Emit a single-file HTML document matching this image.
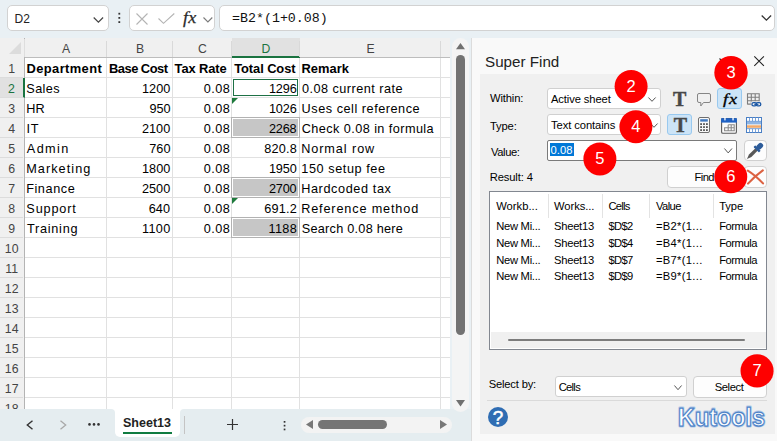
<!DOCTYPE html>
<html lang="en">
<head>
<meta charset="utf-8">
<title>Super Find</title>
<style>
*{box-sizing:border-box;margin:0;padding:0}
html,body{width:777px;height:441px;overflow:hidden}
body{position:relative;background:#e9f0f4;font-family:"Liberation Sans",sans-serif;color:#000}
.abs{position:absolute}
svg{position:absolute;overflow:visible}
/* top bar */
.box{position:absolute;top:5px;height:26px;background:#fff;border:1px solid #d2d2d2;border-radius:5px}
#namebox{left:7px;width:102px}
#namebox span{position:absolute;left:6.6px;top:6px;font-size:12px;line-height:14px;color:#222}
#fbtns{left:129px;width:86px}
#fbar{left:219px;width:556px}
#fbar span{position:absolute;left:12px;top:5px;font-family:"Liberation Mono",monospace;font-size:13.3px;line-height:16px;color:#111}
/* grid */
#sheet{position:absolute;left:0;top:38px;width:449.5px;height:371px;background:#fff;overflow:hidden}
#colhdr{position:absolute;left:0;top:0;width:450px;height:20px;background:#f0f0f0;border-bottom:1px solid #bdbdbd}
#rowhdr{position:absolute;left:0;top:0;width:25px;height:371px;background:#f0f0f0;border-right:1px solid #b4b4b4}
.ch{position:absolute;top:0;height:19px;font-size:12.2px;line-height:23px;text-align:center;color:#444;overflow:hidden}
.chs{background:#e1e1e1;color:#1a7340;border-bottom:2px solid #1a7340;height:20px}
.rh{position:absolute;left:0;width:23.4px;height:20px;font-size:12.3px;line-height:23px;text-align:center;color:#444;border-bottom:1px solid #dcdcdc}
.rhs{background:#e1e1e1;color:#1a7340;border-right:2px solid #1a7340;width:25px}
.vl{position:absolute;top:20px;width:1px;height:351px;background:#e1e1e1}
.hl{position:absolute;left:25px;width:425px;height:1px;background:#e1e1e1}
.c{position:absolute;height:20px;font-size:12.7px;line-height:23px;white-space:nowrap;color:#000}
.b{font-weight:bold;font-size:12.9px}
.r{text-align:right}
.hitb{position:absolute;left:231px;width:69px;height:21px;border:1px solid #b2b2b2}
.hit{position:absolute;left:233px;width:65px;height:17px;background:#c6c6c6}
.active{position:absolute;left:233px;top:41px;width:65px;height:17px;border:1px solid #1e7145}
.tri{position:absolute;width:0;height:0;border-top:6px solid #1e7a3c;border-right:6px solid transparent}
/* tab bar */
#tabbar{position:absolute;left:0;top:409px;width:471px;height:32px;background:#e5edf0}
/* panel */
#panel{position:absolute;left:471px;top:38px;width:306px;height:403px;background:#f9f9f9;border-left:1px solid #dcdcdc}
#inner{position:absolute;left:480px;top:74px;width:294.6px;height:359.5px;background:#f0f0f0}
.t{position:absolute;font-family:"Liberation Sans",sans-serif;font-size:11.2px;line-height:14px;white-space:nowrap;color:#000}
.dd{position:absolute;background:#fff;border:1px solid #d0d0d0;border-radius:3px}
.btn{position:absolute;background:#fdfdfd;border:1px solid #d0d0d0;border-radius:4px}
.sel{position:absolute;background:#cce4f7;border:1px solid #99c9ef;border-radius:3px}
.num{position:absolute;width:33.6px;height:33.6px;border-radius:50%;background:#fe0000;color:#fff;font-size:16.5px;line-height:32.6px;text-align:center}
#tabname{left:123px;top:6px;font-size:12.5px;font-weight:bold;line-height:16px;color:#222;white-space:nowrap}
#ptitle{left:485px;top:52px;font-size:15.2px;line-height:20px;color:#222;white-space:nowrap}
.ticon{font-family:"Liberation Serif",serif;font-weight:bold;font-size:20px;line-height:21px;color:#484848;width:16px;text-align:center;-webkit-text-stroke:0.45px #484848}
.chl{position:absolute;top:3px;width:1px;height:16px;background:#d9d9d9}
</style>
</head>
<body>
<div class="box" id="namebox"><span>D2</span>
<svg style="left:85px;top:11px" width="11" height="6" viewBox="0 0 11 6"><path d="M0.7 0.5 L5.4 5.2 L10.1 0.5" fill="none" stroke="#444" stroke-width="1.2"/></svg>
</div>
<svg style="left:118px;top:13px" width="3" height="11" viewBox="0 0 3 11"><rect x="0.4" y="-0.2" width="1.8" height="1.8" fill="#333"/><rect x="0.4" y="4" width="1.8" height="1.8" fill="#333"/><rect x="0.4" y="8.2" width="1.8" height="1.8" fill="#333"/></svg>
<div class="box" id="fbtns">
<svg style="left:6px;top:7px" width="12" height="12" viewBox="0 0 12 12"><path d="M0.5 0.5 L11.5 11.5 M11.5 0.5 L0.5 11.5" stroke="#b4b4b4" stroke-width="1.1" fill="none"/></svg>
<svg style="left:28px;top:7px" width="17" height="11" viewBox="0 0 17 11"><path d="M0.5 5.5 L5.5 10.3 L16.3 0.5" stroke="#b4b4b4" stroke-width="1.1" fill="none"/></svg>
<span class="abs" style="left:53px;top:1.5px;font-family:'Liberation Serif',serif;font-style:italic;font-size:16.5px;line-height:20px;color:#2a2a2a;letter-spacing:0.3px;-webkit-text-stroke:0.25px #2a2a2a;transform:scaleX(1.1);transform-origin:0 50%">fx</span>
<svg style="left:73px;top:11px" width="10" height="6" viewBox="0 0 10 6"><path d="M0.5 0.5 L4.9 4.9 L9.3 0.5" fill="none" stroke="#7a7a7a" stroke-width="1.1"/></svg>
</div>
<div class="box" id="fbar"><span>=B2*(1+0.08)</span>
<svg style="left:541px;top:9px" width="11" height="6" viewBox="0 0 11 6"><path d="M0.7 0.5 L5.4 5.2 L10.1 0.5" fill="none" stroke="#333" stroke-width="1.3"/></svg>
</div>
<div class="abs" style="left:24px;top:38px;width:1px;height:1px;background:#000"></div>

<div id="sheet">
<div id="colhdr"></div>
<div id="rowhdr"></div>
<svg style="left:9px;top:4px" width="12" height="12" viewBox="0 0 12 12"><path d="M12 0 L12 12 L0 12 Z" fill="#dcdcdc"/></svg>
<div class="abs" style="left:24px;top:1px;width:1px;height:18px;background:#dedede"></div>
<div class="ch" style="left:25px;width:82px">A</div>
<div class="ch" style="left:107px;width:66px">B</div>
<div class="ch" style="left:173px;width:59px">C</div>
<div class="ch chs" style="left:232px;width:68px">D</div>
<div class="ch" style="left:300px;width:141px">E</div>
<div class="chl" style="left:106px"></div>
<div class="chl" style="left:172px"></div>
<div class="chl" style="left:231px"></div>
<div class="chl" style="left:299px"></div>
<div class="chl" style="left:440px"></div>
<div class="vl" style="left:106px"></div>
<div class="vl" style="left:172px"></div>
<div class="vl" style="left:231px"></div>
<div class="vl" style="left:299px"></div>
<div class="vl" style="left:440px"></div>
<div class="hl" style="top:39px"></div>
<div class="rh" style="top:20px">1</div>
<div class="hl" style="top:59px"></div>
<div class="rh rhs" style="top:40px">2</div>
<div class="hl" style="top:79px"></div>
<div class="rh" style="top:60px">3</div>
<div class="hl" style="top:99px"></div>
<div class="rh" style="top:80px">4</div>
<div class="hl" style="top:119px"></div>
<div class="rh" style="top:100px">5</div>
<div class="hl" style="top:139px"></div>
<div class="rh" style="top:120px">6</div>
<div class="hl" style="top:159px"></div>
<div class="rh" style="top:140px">7</div>
<div class="hl" style="top:179px"></div>
<div class="rh" style="top:160px">8</div>
<div class="hl" style="top:199px"></div>
<div class="rh" style="top:180px">9</div>
<div class="hl" style="top:219px"></div>
<div class="rh" style="top:200px">10</div>
<div class="hl" style="top:239px"></div>
<div class="rh" style="top:220px">11</div>
<div class="hl" style="top:259px"></div>
<div class="rh" style="top:240px">12</div>
<div class="hl" style="top:279px"></div>
<div class="rh" style="top:260px">13</div>
<div class="hl" style="top:299px"></div>
<div class="rh" style="top:280px">14</div>
<div class="hl" style="top:319px"></div>
<div class="rh" style="top:300px">15</div>
<div class="hl" style="top:339px"></div>
<div class="rh" style="top:320px">16</div>
<div class="hl" style="top:359px"></div>
<div class="rh" style="top:340px">17</div>
<div class="hl" style="top:379px"></div>
<div class="rh" style="top:360px">18</div>
<div class="hitb" style="top:79px"></div><div class="hit" style="top:81px"></div>
<div class="hitb" style="top:139px"></div><div class="hit" style="top:141px"></div>
<div class="hitb" style="top:179px"></div><div class="hit" style="top:181px"></div>
<div class="c b" style="left:26.51px;top:19px;letter-spacing:0.401px">Department</div>
<div class="c b" style="left:109.09px;top:19px;letter-spacing:-0.521px">Base Cost</div>
<div class="c b" style="left:174.61px;top:19px;letter-spacing:-0.103px">Tax Rate</div>
<div class="c b" style="left:234.20px;top:19px;letter-spacing:-0.078px">Total Cost</div>
<div class="c b" style="left:301.51px;top:19px;letter-spacing:0.035px">Remark</div>
<div class="c" style="left:26.34px;top:40px;letter-spacing:0.355px">Sales</div>
<div class="c" style="left:142.01px;top:40px;letter-spacing:0.022px">1200</div>
<div class="c" style="left:203.64px;top:40px;letter-spacing:0.514px">0.08</div>
<div class="c" style="left:268.89px;top:40px;letter-spacing:-0.085px">1296</div>
<div class="c" style="left:301.92px;top:40px;letter-spacing:0.478px">0.08 current rate</div>
<div class="c" style="left:26.13px;top:60px;letter-spacing:0.143px">HR</div>
<div class="c" style="left:149.39px;top:60px;letter-spacing:-0.005px">950</div>
<div class="c" style="left:203.64px;top:60px;letter-spacing:0.514px">0.08</div>
<div class="c" style="left:268.89px;top:60px;letter-spacing:-0.085px">1026</div>
<div class="c" style="left:301.62px;top:60px;letter-spacing:0.522px">Uses cell reference</div>
<div class="c" style="left:26.42px;top:80px;letter-spacing:0.787px">IT</div>
<div class="c" style="left:141.88px;top:80px;letter-spacing:0.067px">2100</div>
<div class="c" style="left:203.64px;top:80px;letter-spacing:0.514px">0.08</div>
<div class="c" style="left:268.93px;top:80px;letter-spacing:-0.169px">2268</div>
<div class="c" style="left:301.75px;top:80px;letter-spacing:0.425px">Check 0.08 in formula</div>
<div class="c" style="left:26.87px;top:100px;letter-spacing:1.361px">Admin</div>
<div class="c" style="left:149.20px;top:100px;letter-spacing:0.090px">760</div>
<div class="c" style="left:203.64px;top:100px;letter-spacing:0.514px">0.08</div>
<div class="c" style="left:264.31px;top:100px;letter-spacing:0.177px">820.8</div>
<div class="c" style="left:301.13px;top:100px;letter-spacing:0.922px">Normal row</div>
<div class="c" style="left:26.13px;top:120px;letter-spacing:1.075px">Marketing</div>
<div class="c" style="left:142.01px;top:120px;letter-spacing:0.022px">1800</div>
<div class="c" style="left:203.64px;top:120px;letter-spacing:0.514px">0.08</div>
<div class="c" style="left:268.89px;top:120px;letter-spacing:-0.107px">1950</div>
<div class="c" style="left:301.36px;top:120px;letter-spacing:0.560px">150 setup fee</div>
<div class="c" style="left:26.13px;top:140px;letter-spacing:0.589px">Finance</div>
<div class="c" style="left:141.88px;top:140px;letter-spacing:0.067px">2500</div>
<div class="c" style="left:203.64px;top:140px;letter-spacing:0.514px">0.08</div>
<div class="c" style="left:268.93px;top:140px;letter-spacing:-0.181px">2700</div>
<div class="c" style="left:301.13px;top:140px;letter-spacing:0.607px">Hardcoded tax</div>
<div class="c" style="left:26.34px;top:160px;letter-spacing:0.850px">Support</div>
<div class="c" style="left:148.85px;top:160px;letter-spacing:-0.038px">640</div>
<div class="c" style="left:203.64px;top:160px;letter-spacing:0.514px">0.08</div>
<div class="c" style="left:264.14px;top:160px;letter-spacing:0.260px">691.2</div>
<div class="c" style="left:301.13px;top:160px;letter-spacing:0.848px">Reference method</div>
<div class="c" style="left:26.88px;top:180px;letter-spacing:0.751px">Training</div>
<div class="c" style="left:142.01px;top:180px;letter-spacing:0.322px">1100</div>
<div class="c" style="left:203.64px;top:180px;letter-spacing:0.514px">0.08</div>
<div class="c" style="left:268.54px;top:180px;letter-spacing:0.290px">1188</div>
<div class="c" style="left:301.79px;top:180px;letter-spacing:0.252px">Search 0.08 here</div>
<div class="active"></div>
<div class="tri" style="left:232px;top:60px"></div>
<div class="tri" style="left:232px;top:160px"></div>
</div>
<!-- vertical scrollbar -->
<div class="abs" style="left:452px;top:37.7px;width:17px;height:374px;border-radius:8.5px;background:#f4f4f4;z-index:3"></div>
<svg style="left:456px;top:43.2px;z-index:4" width="9" height="6.3" viewBox="0 0 9 6.3"><path d="M4.5 0 L9 6.3 L0 6.3 Z" fill="#707070"/></svg>
<div class="abs" style="left:456px;top:55px;width:9px;height:280px;border-radius:4.5px;background:#727272;z-index:4"></div>
<svg style="left:456px;top:400.3px;z-index:4" width="9" height="6.5" viewBox="0 0 9 6.5"><path d="M0 0 L9 0 L4.5 6.5 Z" fill="#707070"/></svg>
<!-- tab bar -->
<div id="tabbar">
<svg style="left:26px;top:11px" width="8" height="10" viewBox="0 0 8 10"><path d="M6.5 0.7 L1.3 5 L6.5 9.3" fill="none" stroke="#333" stroke-width="1.4"/></svg>
<svg style="left:59px;top:11px" width="8" height="10" viewBox="0 0 8 10"><path d="M1.5 0.7 L6.7 5 L1.5 9.3" fill="none" stroke="#a8a8a8" stroke-width="1.3"/></svg>
<svg style="left:88px;top:14px" width="12" height="3" viewBox="0 0 12 3"><circle cx="1.5" cy="1.4" r="1.3" fill="#333"/><circle cx="6" cy="1.4" r="1.3" fill="#333"/><circle cx="10.5" cy="1.4" r="1.3" fill="#333"/></svg>
<div class="abs" style="left:110px;top:0;width:74px;height:6px;background:#fff"></div>
<div class="abs" style="left:100px;top:0;width:14.5px;height:12px;background:#e5edf0;border-top-right-radius:4px"></div>
<div class="abs" style="left:180px;top:0;width:14px;height:12px;background:#e5edf0;border-top-left-radius:4px"></div>
<div class="abs" style="left:114.5px;top:0;width:65.5px;height:28px;background:#fff;border-radius:0 0 5px 5px"></div>
<div class="abs" id="tabname">Sheet13</div>
<div class="abs" style="left:123px;top:23px;width:49px;height:2px;background:#107c41"></div>
<div class="abs" style="left:184px;top:7px;width:1px;height:18px;background:#c4c4c4"></div>
<svg style="left:227px;top:10px" width="11" height="11" viewBox="0 0 11 11"><path d="M5.5 0 V11 M0 5.5 H11" stroke="#333" stroke-width="1.2" fill="none"/></svg>
<svg style="left:283px;top:12px" width="3" height="10" viewBox="0 0 3 10"><rect x="0.7" y="0" width="1.7" height="1.7" fill="#333"/><rect x="0.7" y="3.8" width="1.7" height="1.7" fill="#333"/><rect x="0.7" y="7.6" width="1.7" height="1.7" fill="#333"/></svg>
<div class="abs" style="left:301px;top:7.5px;width:151px;height:16.5px;border-radius:8.25px;background:#f3f3f3"></div>
<svg style="left:306px;top:11px" width="7" height="9" viewBox="0 0 7 9"><path d="M7 0 L7 9 L0 4.5 Z" fill="#777"/></svg>
<div class="abs" style="left:318px;top:11px;width:69px;height:9.2px;border-radius:4.6px;background:#757575"></div>
<svg style="left:440px;top:11px" width="7" height="9" viewBox="0 0 7 9"><path d="M0 0 L7 4.5 L0 9 Z" fill="#777"/></svg>
</div>

<div id="panel"></div>
<div id="inner"></div>
<div class="abs" id="ptitle">Super Find</div>
<svg style="left:719.3px;top:57.6px" width="10" height="6" viewBox="0 0 10 6"><path d="M0.5 0.5 L5 5 L9.5 0.5" fill="none" stroke="#333" stroke-width="1.1"/></svg>
<svg style="left:753.6px;top:56px" width="10" height="10" viewBox="0 0 10 10"><path d="M0.3 0.3 L9.9 9.8 M9.9 0.3 L0.3 9.8" stroke="#222" stroke-width="1.1" fill="none"/></svg>
<div class="t" style="left:490px;top:91.0px;font-size:11.2px;letter-spacing:-0.13px">Within:</div>
<div class="dd" style="left:547px;top:88px;width:113.5px;height:20.5px"></div>
<div class="t" style="left:551px;top:92.0px;font-size:11.2px;letter-spacing:-0.10px">Active sheet</div>
<svg style="left:648px;top:97px" width="8" height="5" viewBox="0 0 8 5"><path d="M0.4 0.5 L4.0 4.3 L7.6 0.5" fill="none" stroke="#555" stroke-width="1"/></svg>
<div class="abs ticon" style="left:671.7px;top:89px">T</div>
<svg style="left:697px;top:93px" width="14" height="14" viewBox="0 0 14 14"><path d="M2 0.5 H12 Q13.5 0.5 13.5 2 V8 Q13.5 9.5 12 9.5 H6.5 L3.8 13 V9.5 H2 Q0.5 9.5 0.5 8 V2 Q0.5 0.5 2 0.5 Z" fill="none" stroke="#858585" stroke-width="1"/></svg>
<div class="sel" style="left:717px;top:88px;width:25px;height:20.5px"></div>
<div class="abs" style="left:722.5px;top:88.5px;font-family:'Liberation Serif',serif;font-style:italic;font-size:15px;line-height:20px;color:#000;letter-spacing:0.8px;-webkit-text-stroke:0.3px #000;transform:scaleX(1.22);transform-origin:0 50%">fx</div>
<svg style="left:747px;top:93px" width="15" height="14" viewBox="0 0 15 14"><path d="M0.5 0.8 H12.2 M0.5 4.2 H12.2 M0.5 7.7 H12.2 M0.5 11.1 H4.2 M0.5 0.3 V11.6 M4.3 0.3 V11.6 M8.2 0.3 V8.5 M12.2 0.3 V8.5" fill="none" stroke="#7d7d7d" stroke-width="1.1"/><rect x="3.9" y="8.6" width="10.8" height="5.2" fill="#f0f0f0"/><rect x="4.9" y="9.7" width="4.6" height="3.2" rx="1.6" fill="none" stroke="#1b57a4" stroke-width="1.3"/><rect x="9.2" y="9.7" width="4.6" height="3.2" rx="1.6" fill="none" stroke="#1b57a4" stroke-width="1.3"/><path d="M7.3 11.3 H11.4" stroke="#1b57a4" stroke-width="1.3"/></svg>
<div class="t" style="left:490px;top:119.0px;font-size:11.2px;letter-spacing:-0.15px">Type:</div>
<div class="dd" style="left:547px;top:114px;width:113.5px;height:20.5px"></div>
<div class="t" style="left:551px;top:118.0px;font-size:11.2px;letter-spacing:-0.08px">Text contains</div>
<svg style="left:650px;top:123px" width="8" height="5" viewBox="0 0 8 5"><path d="M0.4 0.5 L4.0 4.3 L7.6 0.5" fill="none" stroke="#555" stroke-width="1"/></svg>
<div class="sel" style="left:667px;top:114px;width:25px;height:20.5px"></div>
<div class="abs ticon" style="left:672.5px;top:115px">T</div>
<svg style="left:698px;top:117px" width="12" height="16" viewBox="0 0 12 16"><rect x="0.5" y="0.5" width="11" height="15" rx="1.5" fill="#f8f8f8" stroke="#6e6e6e"/><rect x="2.2" y="2.2" width="7.6" height="2.4" fill="#3f78bf"/><rect x="2.2" y="6.2" width="1.8" height="1.8" fill="#555"/><rect x="5.1" y="6.2" width="1.8" height="1.8" fill="#555"/><rect x="8.0" y="6.2" width="1.8" height="1.8" fill="#555"/><rect x="2.2" y="9.2" width="1.8" height="1.8" fill="#555"/><rect x="5.1" y="9.2" width="1.8" height="1.8" fill="#555"/><rect x="8.0" y="9.2" width="1.8" height="1.8" fill="#555"/><rect x="2.2" y="12.2" width="1.8" height="1.8" fill="#555"/><rect x="5.1" y="12.2" width="1.8" height="1.8" fill="#555"/><rect x="8.0" y="12.2" width="1.8" height="1.8" fill="#555"/></svg>
<svg style="left:721px;top:116.5px" width="16" height="17" viewBox="0 0 16 17"><rect x="0.6" y="1.6" width="14.8" height="14.6" rx="1.3" fill="#fbfbfb" stroke="#5a5a5a" stroke-width="1.1"/><path d="M0.1 1.2 H15.9 V5.6 H0.1 Z" fill="#1f62c4"/><rect x="3.3" y="0" width="1.3" height="3.4" fill="#fff"/><rect x="11.4" y="0" width="1.3" height="3.4" fill="#fff"/><path d="M7.2 7.8 H13.2 V13.8 H3.6 V10.8 H13.2 M7.2 7.8 V13.8 M10.2 7.8 V13.8" fill="none" stroke="#8a8a8a" stroke-width="1.1"/></svg>
<svg style="left:746px;top:117px" width="16" height="16" viewBox="0 0 16 16"><rect x="0.5" y="0.5" width="15" height="15" fill="#fff" stroke="#4a7fc4"/><rect x="1" y="4.4" width="14" height="3" fill="#8fb5e3"/><rect x="1" y="7.9" width="14" height="3.4" fill="#f6c08e"/><rect x="1" y="9.2" width="14" height="1" fill="#f0a460"/><path d="M3.5 0.5 V4.2 M6.5 0.5 V4.2 M9.5 0.5 V4.2 M12.5 0.5 V4.2 M3.5 11.8 V15.5 M6.5 11.8 V15.5 M9.5 11.8 V15.5 M12.5 11.8 V15.5 M1 4.3 H15 M1 11.7 H15" stroke="#6b9ad6" stroke-width="0.9" fill="none"/></svg>
<div class="t" style="left:491px;top:145.0px;font-size:11.2px;letter-spacing:-0.40px">Value:</div>
<div class="dd" style="left:547px;top:140px;width:190px;height:20.5px;border-color:#7a7a7a;border-radius:2px"></div>
<div class="abs" style="left:549.7px;top:142.8px;width:24px;height:13.6px;background:#0078d7"></div>
<div class="t" style="left:550.5px;top:143.2px;font-size:11.2px;letter-spacing:0.10px;color:#fff">0.08</div>
<svg style="left:724px;top:148.3px" width="8.4" height="5.6" viewBox="0 0 8.4 5.6"><path d="M0.4 0.5 L4.2 4.8999999999999995 L8.0 0.5" fill="none" stroke="#555" stroke-width="1"/></svg>
<div class="btn" style="left:744px;top:140px;width:23px;height:20.5px"></div>
<svg style="left:745px;top:142px" width="20" height="18" viewBox="0 0 20 18"><g transform="translate(10.4 8.6) rotate(45) scale(1.13)"><path d="M-1.5 -1.5 H1.5 V6.5 L0 10.6 L-1.5 6.5 Z" fill="#585858"/><rect x="-3.4" y="-3.2" width="6.8" height="2.2" rx="0.6" fill="#2d5c9a"/><rect x="-2.3" y="-8.6" width="4.6" height="6.2" rx="2" fill="#2d5c9a"/></g></svg>
<div class="t" style="left:489.7px;top:170.3px;font-size:11.2px;letter-spacing:-0.12px">Result: 4</div>
<div class="btn" style="left:667px;top:166px;width:75px;height:21.5px"></div>
<div class="t" style="left:694.5px;top:170.0px;font-size:11.2px;letter-spacing:-0.59px">Find</div>
<div class="btn" style="left:744px;top:166px;width:23px;height:21.5px"></div>
<svg style="left:747px;top:170px" width="17" height="14" viewBox="0 0 17 14"><path d="M0.8 0.6 Q8 5 16 13.4 M15.8 0.4 Q8 6 1 13.6" fill="none" stroke="#dc6242" stroke-width="2.1" stroke-linecap="round"/></svg>
<div class="abs" style="left:489px;top:191px;width:278px;height:158.6px;background:#fff;border:1px solid #828790"></div>
<div class="abs" style="left:548.2px;top:193.5px;width:1px;height:24px;background:#e3e3e3"></div>
<div class="abs" style="left:602px;top:193.5px;width:1px;height:24px;background:#e3e3e3"></div>
<div class="abs" style="left:649.2px;top:193.5px;width:1px;height:24px;background:#e3e3e3"></div>
<div class="abs" style="left:713.3px;top:193.5px;width:1px;height:24px;background:#e3e3e3"></div>
<div class="t" style="left:496.2px;top:199.0px;font-size:11.2px;letter-spacing:0.03px">Workb...</div>
<div class="t" style="left:554px;top:199.0px;font-size:11.2px;letter-spacing:-0.05px">Works...</div>
<div class="t" style="left:608.6px;top:199.0px;font-size:11.2px;letter-spacing:-0.81px">Cells</div>
<div class="t" style="left:656px;top:199.0px;font-size:11.2px;letter-spacing:-0.60px">Value</div>
<div class="t" style="left:719.2px;top:199.0px;font-size:11.2px;letter-spacing:-0.07px">Type</div>
<div class="t" style="left:496.2px;top:219px;font-size:11.2px;letter-spacing:-0.27px">New Mi...</div>
<div class="t" style="left:554px;top:219px;font-size:11.2px;letter-spacing:-0.26px">Sheet13</div>
<div class="t" style="left:608.6px;top:219px;font-size:11.2px;letter-spacing:-0.74px">$D$2</div>
<div class="t" style="left:656px;top:219px;font-size:11.2px;letter-spacing:0.30px">=B2*(1...</div>
<div class="t" style="left:719.2px;top:219px;font-size:11.2px;letter-spacing:-0.45px">Formula</div>
<div class="t" style="left:496.2px;top:236px;font-size:11.2px;letter-spacing:-0.27px">New Mi...</div>
<div class="t" style="left:554px;top:236px;font-size:11.2px;letter-spacing:-0.26px">Sheet13</div>
<div class="t" style="left:608.6px;top:236px;font-size:11.2px;letter-spacing:-0.74px">$D$4</div>
<div class="t" style="left:656px;top:236px;font-size:11.2px;letter-spacing:0.30px">=B4*(1...</div>
<div class="t" style="left:719.2px;top:236px;font-size:11.2px;letter-spacing:-0.45px">Formula</div>
<div class="t" style="left:496.2px;top:253px;font-size:11.2px;letter-spacing:-0.27px">New Mi...</div>
<div class="t" style="left:554px;top:253px;font-size:11.2px;letter-spacing:-0.26px">Sheet13</div>
<div class="t" style="left:608.6px;top:253px;font-size:11.2px;letter-spacing:-0.74px">$D$7</div>
<div class="t" style="left:656px;top:253px;font-size:11.2px;letter-spacing:0.30px">=B7*(1...</div>
<div class="t" style="left:719.2px;top:253px;font-size:11.2px;letter-spacing:-0.45px">Formula</div>
<div class="t" style="left:496.2px;top:269px;font-size:11.2px;letter-spacing:-0.27px">New Mi...</div>
<div class="t" style="left:554px;top:269px;font-size:11.2px;letter-spacing:-0.26px">Sheet13</div>
<div class="t" style="left:608.6px;top:269px;font-size:11.2px;letter-spacing:-0.74px">$D$9</div>
<div class="t" style="left:656px;top:269px;font-size:11.2px;letter-spacing:0.30px">=B9*(1...</div>
<div class="t" style="left:719.2px;top:269px;font-size:11.2px;letter-spacing:-0.45px">Formula</div>
<div class="abs" style="left:490.5px;top:332.4px;width:275.5px;height:15.6px;background:#f0f0f0"></div>
<div class="abs" style="left:508px;top:339px;width:237px;height:2px;background:#7c7c7c;border-radius:1px"></div>
<div class="t" style="left:488.7px;top:376.8px;font-size:11.2px;letter-spacing:-0.18px">Select by:</div>
<div class="dd" style="left:555px;top:376.3px;width:131.5px;height:20.5px"></div>
<div class="t" style="left:558.7px;top:380.0px;font-size:11.2px;letter-spacing:-0.70px">Cells</div>
<svg style="left:674px;top:384.5px" width="8" height="5.4" viewBox="0 0 8 5.4"><path d="M0.4 0.5 L4.0 4.7 L7.6 0.5" fill="none" stroke="#555" stroke-width="1"/></svg>
<div class="btn" style="left:693.3px;top:376px;width:73.7px;height:21.6px"></div>
<div class="t" style="left:714.7px;top:380.0px;font-size:11.2px;letter-spacing:-0.38px">Select</div>
<div class="abs" style="left:487px;top:400px;width:280px;height:1px;background:#dadada"></div>
<div class="abs" style="left:488px;top:407px;width:20px;height:20px;border-radius:50%;background:#2f6db3;color:#fff;font-size:18.8px;line-height:21.5px;text-align:center;-webkit-text-stroke:0.5px #fff">?</div>
<svg style="left:674px;top:402px" width="96" height="30" viewBox="0 0 96 30"><text x="4" y="24.2" font-family="Liberation Sans, sans-serif" font-weight="bold" font-size="26.5" textLength="87" lengthAdjust="spacingAndGlyphs" fill="#fff" stroke="#b4cbe9" stroke-width="2.8" stroke-linejoin="round">Kutools</text><text x="4" y="24.2" font-family="Liberation Sans, sans-serif" font-weight="bold" font-size="26.5" textLength="87" lengthAdjust="spacingAndGlyphs" fill="#fdfeff" stroke="#4f84c8" stroke-width="1.25" stroke-linejoin="round">Kutools</text></svg>
<svg style="left:0;top:0;z-index:9" width="777" height="441" viewBox="0 0 777 441">
<circle cx="631.1" cy="86.4" r="16.5" fill="#fe0000"/><text x="631.1" y="91.7" text-anchor="middle" font-family="Liberation Sans, sans-serif" font-size="16.5" fill="#fff">2</text>
<circle cx="731" cy="72.7" r="16.7" fill="#fe0000"/><text x="731" y="78.0" text-anchor="middle" font-family="Liberation Sans, sans-serif" font-size="16.5" fill="#fff">3</text>
<circle cx="635.9" cy="126.7" r="16.5" fill="#fe0000"/><text x="635.9" y="132.0" text-anchor="middle" font-family="Liberation Sans, sans-serif" font-size="16.5" fill="#fff">4</text>
<circle cx="599.9" cy="158.9" r="16.5" fill="#fe0000"/><text x="599.9" y="164.2" text-anchor="middle" font-family="Liberation Sans, sans-serif" font-size="16.5" fill="#fff">5</text>
<circle cx="730.8" cy="176.8" r="16.45" fill="#fe0000"/><text x="730.8" y="182.1" text-anchor="middle" font-family="Liberation Sans, sans-serif" font-size="16.5" fill="#fff">6</text>
<circle cx="757.05" cy="370.9" r="16.55" fill="#fe0000"/><text x="757.05" y="376.2" text-anchor="middle" font-family="Liberation Sans, sans-serif" font-size="16.5" fill="#fff">7</text>
</svg>
</body>
</html>
